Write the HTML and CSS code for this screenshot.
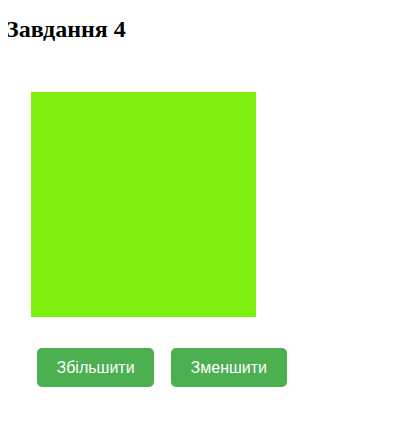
FILE: index.html
```html
<!DOCTYPE html>
<html lang="uk">
<head>
<meta charset="utf-8">
<link rel="stylesheet" href="styles.css">
</head>
<body>
<h2 class="title">Завдання 4</h2>
<div class="stage">
  <div class="square"></div>
</div>
<div class="controls">
  <button class="btn">Збільшити</button>
  <button class="btn">Зменшити</button>
</div>
</body>
</html>
```
FILE: styles.css
```css
body {
  margin: 8px;
  font-family: "Liberation Serif", serif;
}
.title {
  font-size: 24px;
  font-weight: bold;
  margin: 8px 0 25px -2px;
}
.stage {
  padding: 24px 0 0 23px;
}
.square {
  width: 225px;
  height: 225px;
  background: #7ff00e;
}
.controls {
  display: flex;
  gap: 17px;
  padding: 31px 0 0 29px;
}
.btn {
  background: #4caf50;
  color: #fff;
  border: none;
  border-radius: 5px;
  font-family: "Liberation Sans", Arial, sans-serif;
  font-size: 16px;
  height: 39px;
  padding: 0 19.5px;
  cursor: pointer;
}
```
